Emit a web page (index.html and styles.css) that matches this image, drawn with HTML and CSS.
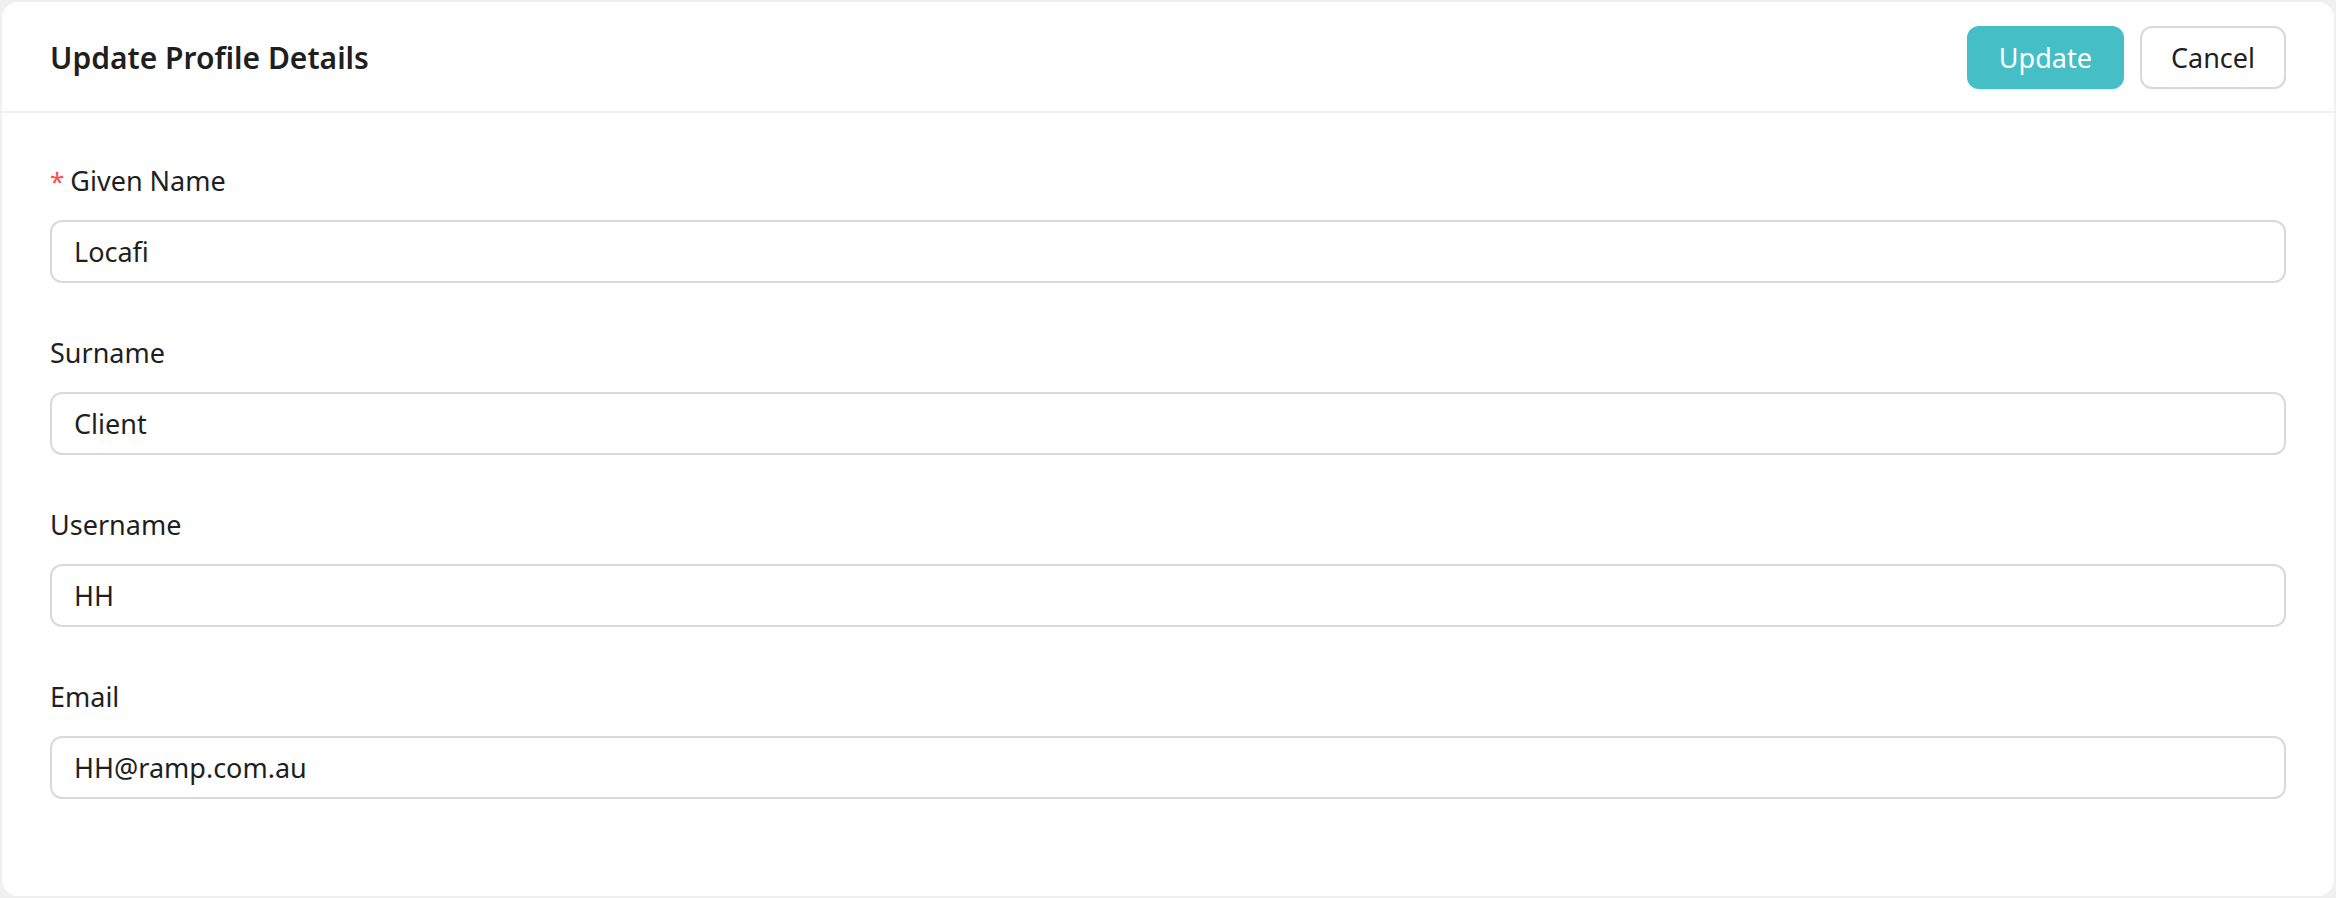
FILE: index.html
```html
<!DOCTYPE html>
<html lang="en">
<head>
    <meta charset="UTF-8">
    <title>Update Profile Details</title>
    <link rel="stylesheet" href="styles.css">
</head>
<body>
<div class="card">
    <div class="card-head">
        <h2 class="title">Update Profile Details</h2>
        <div class="actions">
            <button class="btn btn-primary">Update</button>
            <button class="btn">Cancel</button>
        </div>
    </div>

    <form class="card-body">
        <div class="field">
            <label class="label required">Given Name</label>
            <input class="input" type="text" value="Locafi">
        </div>
        <div class="field">
            <label class="label">Surname</label>
            <input class="input" type="text" value="Client">
        </div>
        <div class="field">
            <label class="label">Username</label>
            <input class="input" type="text" value="HH">
        </div>
        <div class="field">
            <label class="label">Email</label>
            <input class="input" type="text" value="HH@ramp.com.au">
        </div>
    </form>
</div>
</body>
</html>
```

FILE: styles.css
```css
body {
    margin: 0;
    padding: 2px;
    background: #f0f0f0;
    font-family: "Noto Sans", "Open Sans", sans-serif;
    color: #1f1f1f;
}

.card {
    background: #fff;
    border-radius: 16px;
    min-height: 894px;
    box-sizing: border-box;
}

.card-head {
    display: flex;
    align-items: center;
    justify-content: space-between;
    padding: 24px 48px 22px;
    border-bottom: 2px solid #f0f0f0;
}

.title {
    margin: 0;
    font-size: 30px;
    font-weight: 600;
}

.actions {
    display: flex;
    gap: 16px;
}

.btn {
    height: 63px;
    padding: 0 29px;
    font-family: inherit;
    font-size: 27px;
    color: #1f1f1f;
    background: #fff;
    border: 2px solid #d9d9d9;
    border-radius: 12px;
    box-shadow: 0 2px 0 rgba(0, 0, 0, 0.02);
}

.btn-primary {
    padding: 0 30px;
    color: #fff;
    background: #46bec6;
    border-color: #46bec6;
    box-shadow: 0 2px 0 rgba(5, 145, 255, 0.06);
}

.card-body {
    padding: 46px 48px 48px;
}

.field {
    margin-bottom: 48px;
}

.label {
    display: block;
    font-size: 27px;
    line-height: 44px;
    padding-bottom: 17px;
}

.required::before {
    content: "*";
    color: #ff4d4f;
    margin-right: 6px;
    font-size: 26px;
}

.input {
    display: block;
    width: 100%;
    box-sizing: border-box;
    height: 63px;
    padding: 0 22px;
    font-family: inherit;
    font-size: 27px;
    color: #1f1f1f;
    border: 2px solid #d9d9d9;
    border-radius: 12px;
    outline: none;
}
```
